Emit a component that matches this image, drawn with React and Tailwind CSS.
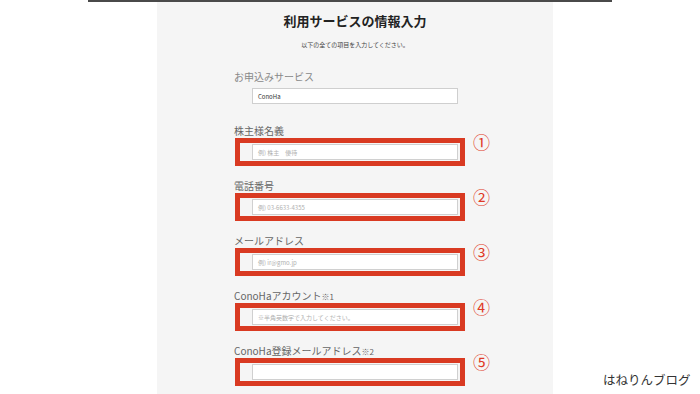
export default function App() {
  const font = { fontFamily: '"Noto Sans CJK JP", "Liberation Sans", sans-serif' };
  const groups = [
    { label: "株主様名義", ph: "例) 株主　優待", num: "①" },
    { label: "電話番号", ph: "例) 03-6633-4355", num: "②" },
    { label: "メールアドレス", ph: "例) ir@gmo.jp", num: "③" },
    { label: "ConoHaアカウント", note: "※1", ph: "※半角英数字で入力してください。", num: "④" },
    { label: "ConoHa登録メールアドレス", note: "※2", ph: "", num: "⑤" },
  ];
  return (
    <div className="relative w-[700px] h-[394px] bg-white overflow-hidden flex flex-col font-['Noto_Sans_CJK_JP',sans-serif]">
      <div className="ml-[88px] w-[524px] h-[2px] bg-[#4a4a4a] shrink-0" />
      <div className="ml-[157px] w-[396px] flex-1 bg-[#f5f5f5] flex flex-col">
        <div className="mt-[11px] h-[16px] leading-[16px] text-center text-[13px] font-bold text-[#222]">
          利用サービスの情報入力
        </div>
        <div className="mt-[12px] h-[8px] leading-[8px] text-center text-[6px] text-[#444]">
          以下の全ての項目を入力してください。
        </div>
        <div className="pl-[77px] flex flex-col">
          <div className="mt-[22px] h-[12px] leading-[12px] text-[10px] text-[#888]">
            お申込みサービス
          </div>
          <div className="mt-[5px] ml-[18px] w-[206px] h-[16px] bg-white border border-[#cfcfcf] flex items-center px-[5px] text-[6px] text-[#333]">
            ConoHa
          </div>
          <div className="mt-[21px] flex flex-col gap-[14px]">
            {groups.map((g) => (
              <div key={g.num} className="flex flex-col">
                <div className="h-[12px] leading-[12px] text-[10px] text-[#666] whitespace-nowrap">
                  {g.label}
                  {g.note && <span className="text-[8px]">{g.note}</span>}
                </div>
                <div className="mt-[1px] flex items-start">
                  <div className="ml-[1px] w-[230px] h-[28px] border-[5px] border-[#d93a22] flex items-center justify-end pr-[2px]">
                    <div className="w-[206px] h-[16px] bg-white border border-[#d0d0d0] flex items-center px-[5px] text-[6px] text-[#b0b0b0] whitespace-nowrap">
                      {g.ph}
                    </div>
                  </div>
                  <div className="ml-[8px] -mt-[6px] text-[17px] leading-[20px] text-[#e03a26]">
                    {g.num}
                  </div>
                </div>
              </div>
            ))}
          </div>
        </div>
      </div>
      <div
        className="absolute left-[603px] top-[372px] text-[12.5px] leading-[16px] text-[#333]"
        style={font}
      >
        はねりんブログ
      </div>
    </div>
  );
}
